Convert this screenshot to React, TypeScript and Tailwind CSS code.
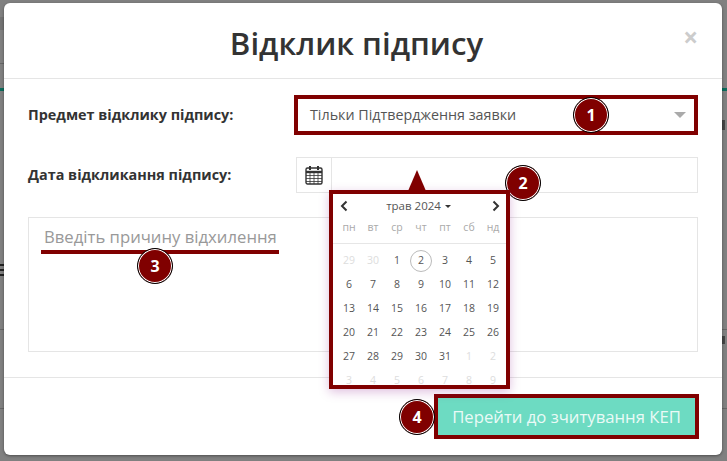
import React from "react";

const Badge = ({ n, className }: { n: number; className: string }) => (
  <div className={`absolute flex h-[36px] w-[36px] items-center justify-center rounded-full border border-black bg-[#800000] text-[16px] font-bold text-white shadow-[inset_0_0_0_1px_#fff] ${className}`}>
    {n}
  </div>
);

const weeks = [
  [29, 30, 1, 2, 3, 4, 5],
  [6, 7, 8, 9, 10, 11, 12],
  [13, 14, 15, 16, 17, 18, 19],
  [20, 21, 22, 23, 24, 25, 26],
  [27, 28, 29, 30, 31, 1, 2],
  [3, 4, 5, 6, 7, 8, 9],
];

const Calendar = () => (
  <div className="absolute left-[325px] top-[187px] z-10 h-[199px] w-[181px] overflow-hidden border-[4px] border-[#800000] bg-white shadow-[0_3px_10px_rgba(128,0,128,0.25)]">
    <div className="flex h-[24px] items-center justify-between pl-[6px] pr-[5px] text-[#333]">
      <svg width="10" height="12" viewBox="0 0 10 12" fill="none" stroke="#333" strokeWidth="2"><path d="M7.5 1.5 3 6l4.5 4.5" /></svg>
      <div className="flex items-center gap-[4px] pr-[3px] text-[11.5px] text-[#555]">
        трав 2024
        <span className="h-0 w-0 border-x-[3.5px] border-t-[3.5px] border-x-transparent border-t-[#333]" />
      </div>
      <svg width="10" height="12" viewBox="0 0 10 12" fill="none" stroke="#333" strokeWidth="2"><path d="M2.5 1.5 7 6l-4.5 4.5" /></svg>
    </div>
    <div className="grid h-[19px] grid-cols-[repeat(7,24px)] items-center pl-[4px] text-center text-[10.5px] text-[#aaa]">
      {["пн", "вт", "ср", "чт", "пт", "сб", "нд"].map((d) => <span key={d}>{d}</span>)}
    </div>
    <div className="mt-[6px] border-t border-[#e6e6e6] pt-[5px]">
      {weeks.map((w, i) => (
        <div key={i} className="grid h-[24px] grid-cols-[repeat(7,24px)] items-center pl-[4px] text-center text-[10.5px]">
          {w.map((d, j) => {
            const muted = (i === 0 && d > 20) || (i >= 4 && d < 10);
            const today = i === 0 && d === 2;
            return (
              <span key={j} className={`mx-auto flex h-[22px] w-[22px] items-center justify-center rounded-full ${muted ? "text-[#ddd]" : "text-[#555]"} ${today ? "border border-[#bbb]" : ""}`}>
                {d}
              </span>
            );
          })}
        </div>
      ))}
    </div>
  </div>
);

export default function App() {
  return (
    <div className="flex h-[461px] w-[727px] overflow-hidden bg-[#808080] font-['Open_Sans',sans-serif]">
      {/* dimmed page behind the dialog: left edge */}
      <div className="flex w-[4px] shrink-0 flex-col">
        <div className="mt-[17px] h-[13px] bg-[#737373]" />
        <div className="mt-[33px] h-px bg-[#666]" />
        <div className="mt-[24px] h-[3px] bg-[#0b6b5b]" />
        <div className="mt-[173px] h-[14px] bg-[repeating-linear-gradient(#222_0_2px,transparent_2px_5px)]" />
        <div className="mt-[51px] h-px bg-[#666]" />
        <div className="mt-[78px] h-px bg-[#666]" />
      </div>

      <div className="relative mt-[3px] flex h-[452px] w-[718px] shrink-0 flex-col rounded-[6px] bg-white shadow-[0_1px_3px_rgba(0,0,0,0.4)]">
        <div className="relative flex h-[76px] shrink-0 items-center justify-center border-b border-[#e5e5e5] pr-[13px] pt-[6px]">
          <h1 className="text-[31.2px] font-semibold leading-none text-[#333]">Відклик підпису</h1>
          <span className="absolute right-[24px] top-[22px] text-[26px] font-bold leading-[24px] text-[#ccc]">×</span>
        </div>

        <div className="relative flex h-[299px] shrink-0 flex-col border-b border-[#e5e5e5] pl-[24px] pr-[24px]">
          <div className="mt-[16px] flex h-[40px] items-center">
            <label className="w-[266px] text-[14.4px] font-bold text-[#333]">Предмет відклику підпису:</label>
            <div className="flex h-[40px] w-[404px] items-center justify-between border-[4px] border-[#800000] pl-[12px] pr-[8px] text-[14.3px] text-[#555]">
              Тільки Підтвердження заявки
              <span className="h-0 w-0 border-x-[6px] border-t-[6px] border-x-transparent border-t-[#aaa]" />
            </div>
          </div>

          <div className="mt-[22px] flex h-[36px] items-center">
            <label className="w-[268px] text-[14.4px] font-bold text-[#333]">Дата відкликання підпису:</label>
            <div className="flex h-[36px] w-[36px] items-center justify-center border border-[#e5e5e5]">
              <svg width="18" height="20" viewBox="0 0 18 20" fill="none" stroke="#333">
                <rect x="1" y="3" width="16" height="16" rx="1.5" strokeWidth="1.4" />
                <path d="M1 7h16" strokeWidth="2.4" />
                <path d="M1 10.5h16M1 13.5h16M1 16.5h16M5 7v12M9 7v12M13 7v12" strokeWidth="0.8" />
                <path d="M5 1v4M13 1v4" strokeWidth="2" />
              </svg>
            </div>
            <div className="h-[36px] flex-1 border border-l-0 border-[#e5e5e5]" />
          </div>

          <div className="mt-[24px] h-[135px] border border-[#e5e5e5] pl-[15px] pt-[6px]">
            <div className="text-[16.7px] leading-[26px] text-[#999]">Введіть причину відхилення</div>
            <div className="-ml-[3px] h-[4px] w-[238px] bg-[#800000]" />
          </div>

          <Badge n={3} className="left-[133px] top-[169px]" />
          <Badge n={1} className="left-[569px] top-[18px]" />
          <Badge n={2} className="left-[501px] top-[86px]" />
          <div className="absolute left-[404px] top-[91px] z-20 h-0 w-0 border-x-[9px] border-b-[21px] border-x-transparent border-b-[#800000]" />
        </div>

        <div className="relative flex flex-1 items-start justify-end pr-[23px] pt-[16px]">
          <button className="flex h-[45px] w-[265px] items-center justify-center border-[4px] border-[#800000] bg-[#6ddbc2] text-[16.7px] text-[#eafaf6]">
            Перейти до зчитування КЕП
          </button>
          <Badge n={4} className="left-[395px] top-[21px]" />
        </div>

        <Calendar />
      </div>

      {/* dimmed page behind the dialog: right edge */}
      <div className="flex flex-1 flex-col">
        <div className="mt-[88px] h-[3px] bg-[#0b6b5b]" />
        <div className="mt-[29px] h-[10px] w-[3px] bg-[#444]" />
        <div className="mt-[199px] h-px bg-[#666]" />
        <div className="mt-[6px] h-[8px] w-[3px] bg-[#444]" />
        <div className="mt-[64px] h-px bg-[#666]" />
      </div>
    </div>
  );
}
